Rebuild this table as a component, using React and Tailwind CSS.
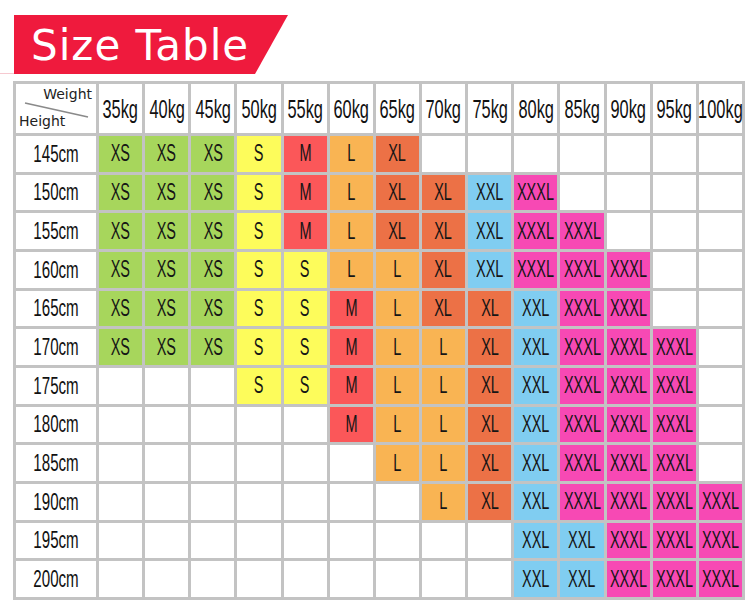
import React from "react";

const WEIGHTS = ["35kg", "40kg", "45kg", "50kg", "55kg", "60kg", "65kg", "70kg", "75kg", "80kg", "85kg", "90kg", "95kg", "100kg"];

const SIZE_COLOR = {
  XS: "bg-[#a7d65c]",
  S: "bg-[#fdfc5b]",
  M: "bg-[#fb5759]",
  L: "bg-[#f9b453]",
  XL: "bg-[#ec7146]",
  XXL: "bg-[#80cdf1]",
  XXXL: "bg-[#f749b4]",
};

const ROWS = [
  ["145cm", "XS XS XS S M L XL - - - - - - -"],
  ["150cm", "XS XS XS S M L XL XL XXL XXXL - - - -"],
  ["155cm", "XS XS XS S M L XL XL XXL XXXL XXXL - - -"],
  ["160cm", "XS XS XS S S L L XL XXL XXXL XXXL XXXL - -"],
  ["165cm", "XS XS XS S S M L XL XL XXL XXXL XXXL - -"],
  ["170cm", "XS XS XS S S M L L XL XXL XXXL XXXL XXXL -"],
  ["175cm", "- - - S S M L L XL XXL XXXL XXXL XXXL -"],
  ["180cm", "- - - - - M L L XL XXL XXXL XXXL XXXL -"],
  ["185cm", "- - - - - - L L XL XXL XXXL XXXL XXXL -"],
  ["190cm", "- - - - - - - L XL XXL XXXL XXXL XXXL XXXL"],
  ["195cm", "- - - - - - - - - XXL XXL XXXL XXXL XXXL"],
  ["200cm", "- - - - - - - - - XXL XXL XXXL XXXL XXXL"],
];

// the picture uses a tall condensed face; squeeze Liberation Sans instead
const Narrow = ({ children, className = "" }) => (
  <span className={`inline-block whitespace-nowrap font-['Liberation_Sans',sans-serif] scale-x-[0.63] ${className}`}>
    {children}
  </span>
);

export default function App() {
  return (
    <div className="w-[750px] h-[611px] bg-white overflow-hidden">
      <div className="flex items-end pt-[15px]">
        <div className="w-[14px] h-px bg-[#f6c9d0]" />
        <div className="w-[274px] h-[59px] bg-[#ef1a3d] [clip-path:polygon(0_0,100%_0,calc(100%-33px)_100%,0_100%)] flex items-center pl-[17px]">
          <span className="font-['DejaVu_Sans',sans-serif] text-white text-[42px] tracking-[1px] leading-none mt-[3px]">Size Table</span>
        </div>
      </div>

      <div className="ml-[13px] mt-[7px] w-[732px] h-[519px] bg-[#c3c3c3] p-[3px] grid grid-cols-[80px_repeat(14,minmax(0,1fr))] grid-rows-[49px_repeat(12,minmax(0,1fr))] gap-[3px]">
        <div className="bg-white relative font-['DejaVu_Sans',sans-serif] text-[14px] text-[#222]">
          <span className="absolute right-[4px] top-[3px] leading-none">Weight</span>
          <span className="absolute left-[3px] bottom-[5px] leading-none">Height</span>
          <svg className="absolute inset-0" width="80" height="49" viewBox="0 0 80 49">
            <line x1="9" y1="19" x2="72" y2="33" stroke="#8a8a8a" strokeWidth="1.5" />
          </svg>
        </div>
        {WEIGHTS.map((w) => (
          <div key={w} className="bg-white min-w-0 flex items-center justify-center text-[26px] text-[#111] leading-none">
            <Narrow>{w}</Narrow>
          </div>
        ))}
        {ROWS.map(([h, sizes]) => (
          <React.Fragment key={h}>
            <div className="bg-white min-w-0 flex items-center justify-center text-[24px] text-[#111] leading-none">
              <Narrow>{h}</Narrow>
            </div>
            {sizes.split(" ").map((s, i) => (
              <div
                key={i}
                className={`min-w-0 flex items-center justify-center text-[23px] text-[#151515] leading-none ${s === "-" ? "bg-white" : SIZE_COLOR[s]}`}
              >
                {s === "-" ? null : <Narrow>{s}</Narrow>}
              </div>
            ))}
          </React.Fragment>
        ))}
      </div>
    </div>
  );
}
